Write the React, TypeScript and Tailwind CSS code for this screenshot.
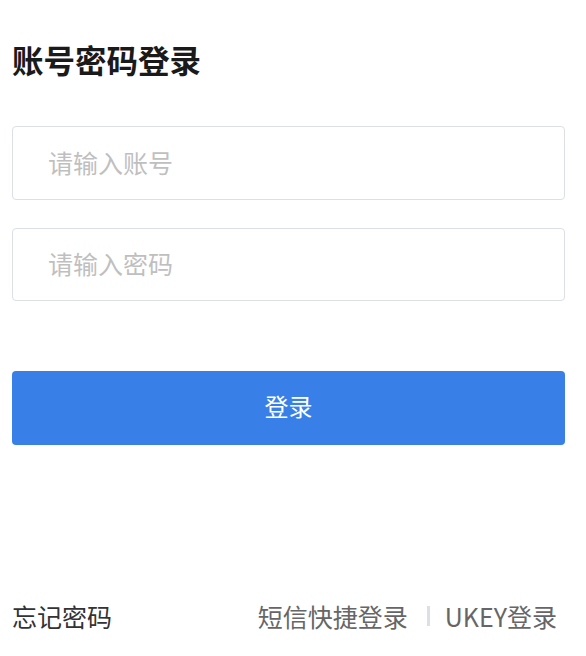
export default function App() {
  return (
    <div
      className="w-[586px] h-[656px] bg-white pl-3 pr-[21px] flex flex-col"
      style={{ fontFamily: '"Microsoft YaHei", "Noto Sans CJK SC", "Noto Sans", sans-serif' }}
    >
      <h1 className="mt-[36px] h-[48px] leading-[46px] text-[31.5px] font-bold text-[#1a1a1a]">账号密码登录</h1>
      <div className="mt-[42px] flex flex-col gap-[28px]">
        <input
          type="text"
          placeholder="请输入账号"
          className="h-[74px] w-full border border-[#dcdfe6] rounded-[4px] pl-[35px] pb-[3px] text-[25px] text-[#333] placeholder:text-[#bfbfbf] outline-none"
        />
        <input
          type="password"
          placeholder="请输入密码"
          className="h-[73px] w-full border border-[#dcdfe6] rounded-[4px] pl-[35px] pb-[3px] text-[25px] text-[#333] placeholder:text-[#bfbfbf] outline-none"
        />
      </div>
      <button className="mt-[70px] h-[74px] w-full rounded-[4px] bg-[#3880e8] text-white text-[24px] pb-[4px]">登录</button>
      <div className="mt-auto mb-[24px] flex items-center justify-between text-[25px] leading-[32px]">
        <span className="text-[#333]">忘记密码</span>
        <div className="flex items-center mr-[8px] text-[#666]">
          <span>短信快捷登录</span>
          <span className="ml-[19px] mr-[15px] w-[3px] h-[20px] bg-[#dcdfe6]" />
          <span>UKEY登录</span>
        </div>
      </div>
    </div>
  )
}
